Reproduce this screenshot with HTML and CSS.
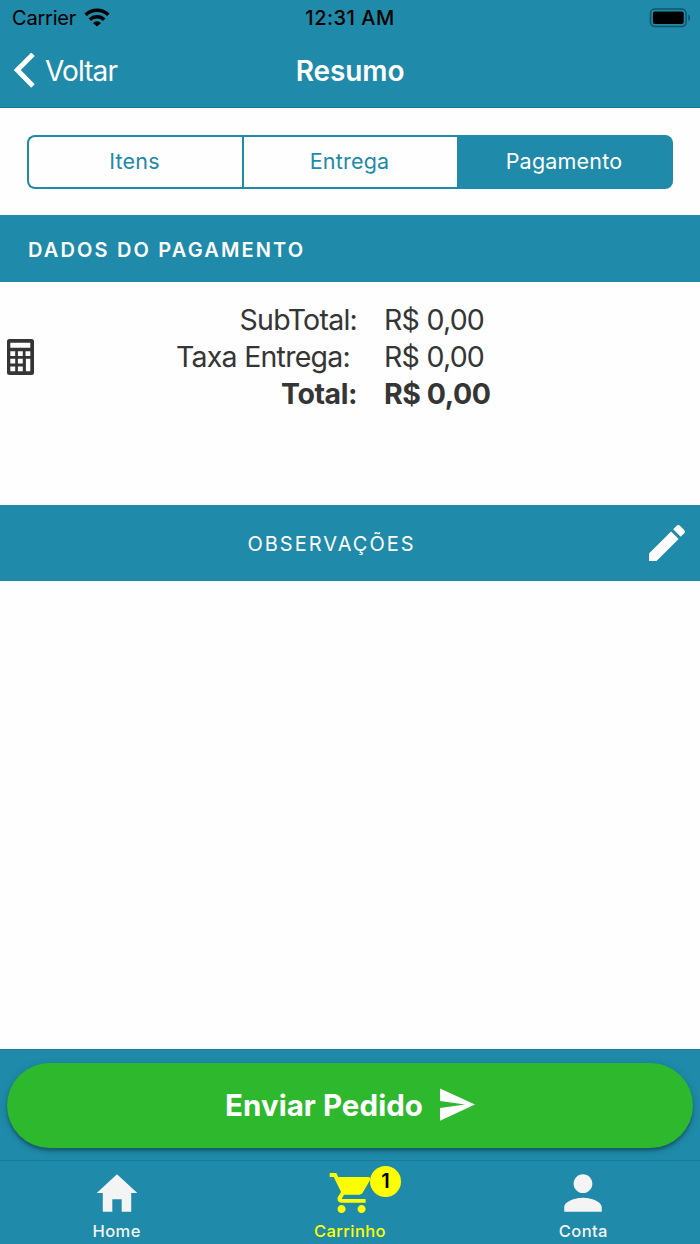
FILE: index.html
```html
<!DOCTYPE html>
<html lang="pt-BR">
<head>
    <meta charset="UTF-8">
    <meta name="viewport" content="width=device-width, initial-scale=1.0">
    <title>Resumo</title>
    <link rel="stylesheet" href="styles.css">
</head>
<body>
    <div class="app">
        <header class="header">
            <div class="status-bar">
                <div class="carrier">
                    <span class="carrier-name">Carrier</span>
                    <svg class="wifi" viewBox="0 0 26 19">
                        <g fill="none" stroke="#000" stroke-width="3.6">
                            <path d="M1.6 6.900a16.400 16.400 0 0 1 22.800 0"/>
                            <path d="M5.800 11.700a10.400 10.400 0 0 1 14.400 0"/>
                        </g>
                        <path d="M13 18.600L9 14.900a6 6 0 0 1 8 0z"/>
                    </svg>
                </div>
                <span class="clock">12:31 AM</span>
                <svg class="battery" viewBox="0 0 42 20">
                    <rect x="1.5" y="1" width="35.600" height="17.400" rx="4.400" fill="none" stroke="#115568" stroke-width="1.500"/>
                    <rect x="3.900" y="3.600" width="30.800" height="12.400" rx="2"/>
                    <path d="M39.300 6.600c2.400.8 2.400 5.600 0 6.400z" fill="#115568"/>
                </svg>
            </div>
            <div class="nav-bar">
                <a class="back" href="#">
                    <svg class="chevron" viewBox="0 0 22 36"><path d="M19 1.300L3.300 17l15.700 16" fill="none" stroke="#fff" stroke-width="5"/></svg>
                    <span class="back-text">Voltar</span>
                </a>
                <h1 class="title">Resumo</h1>
            </div>
        </header>

        <main class="content">
            <div class="segment">
                <button class="segment-button">Itens</button>
                <button class="segment-button">Entrega</button>
                <button class="segment-button active">Pagamento</button>
            </div>

            <h2 class="divider">Dados do Pagamento</h2>

            <div class="totals">
                <svg class="calculator" viewBox="0 0 27 36">
                    <path fill-rule="evenodd" d="M2.500 0h22A2.500 2.500 0 0 1 27 2.500v31a2.500 2.500 0 0 1-2.500 2.500h-22A2.500 2.500 0 0 1 0 33.500v-31A2.500 2.500 0 0 1 2.500 0zM3.300 3.800v5h20v-5zM3.300 12.200v4.800h4.900v-4.800zM10.900 12.200v4.800h4.900v-4.800zM18.500 12.200v4.800h4.800v-4.800zM3.300 19.800v4.800h4.900v-4.800zM10.900 19.800v4.800h4.900v-4.800zM3.300 27.400v4.900h4.900v-4.900zM10.900 27.400v4.900h4.900v-4.900zM18.900 19.800v12.500h4.400v-12.500z"/>
                </svg>
                <div class="totals-grid">
                    <span class="label">SubTotal:</span>
                    <span class="value">R$ 0,00</span>
                    <span class="label fee">Taxa Entrega:</span>
                    <span class="value">R$ 0,00</span>
                    <span class="label total">Total:</span>
                    <span class="value total">R$ 0,00</span>
                </div>
            </div>

            <div class="notes">
                <span class="notes-text">Observações</span>
                <svg class="pencil" viewBox="0 0 512 512"><path d="M64 368v80h80l235.727-235.729-79.999-79.998L64 368zm377.602-217.602c8.531-8.531 8.531-21.334 0-29.865l-50.135-50.135c-8.531-8.531-21.334-8.531-29.865 0l-39.468 39.469 79.999 79.998 39.469-39.467z"/></svg>
            </div>
        </main>

        <footer class="footer">
            <button class="send">
                <span class="send-text">Enviar Pedido</span>
                <svg class="send-icon" viewBox="0 0 512 512"><path d="M48 448l416-192L48 64v149.333L346 256 48 298.667z"/></svg>
            </button>
        </footer>

        <nav class="tabs">
            <a class="tab" href="#">
                <svg class="tab-icon" viewBox="0 0 512 512"><path d="M208 448V320h96v128h97.600V256H464L256 64 48 256h62.400v192z"/></svg>
                <span class="tab-text">Home</span>
            </a>
            <a class="tab selected" href="#">
                <svg class="tab-icon" viewBox="0 0 512 512"><path d="M169.600 377.600c-22.882 0-41.600 18.718-41.600 41.601 0 22.882 18.718 41.600 41.600 41.600s41.601-18.718 41.601-41.600c-.001-22.884-18.720-41.601-41.601-41.601zM48 51.200v41.600h41.600l74.883 151.682-31.308 50.954c-3.118 5.200-5.200 12.482-5.200 19.765 0 27.850 19.025 41.600 44.825 41.600H416v-40H177.893c-3.118 0-5.200-2.082-5.200-5.200 0-1.036 2.207-5.200 2.207-5.200l20.782-32.800h154.954c15.601 0 29.128-8.317 36.400-21.836l74.882-128.800c1.237-2.461 2.082-6.246 2.082-10.400 0-11.446-9.364-19.765-20.800-19.765H135.364L115.600 51.200H48zm326.399 326.400c-22.882 0-41.600 18.718-41.600 41.601 0 22.882 18.718 41.600 41.600 41.600S416 442.082 416 419.200c0-22.883-18.719-41.600-41.601-41.600z"/></svg>
                <span class="badge">1</span>
                <span class="tab-text">Carrinho</span>
            </a>
            <a class="tab" href="#">
                <svg class="tab-icon" viewBox="0 0 512 512"><path d="M256 256c52.805 0 96-43.201 96-96s-43.195-96-96-96-96 43.201-96 96 43.195 96 96 96zm0 48c-63.598 0-192 32.402-192 96v48h384v-48c0-63.598-128.402-96-192-96z"/></svg>
                <span class="tab-text">Conta</span>
            </a>
        </nav>
    </div>
</body>
</html>
```
FILE: styles.css
```css
* {
    box-sizing: border-box;
}
body {
    margin: 0;
    font-family: Inter, "Liberation Sans", sans-serif;
    background-color: #fefefe;
    color: #353535;
}
a {
    text-decoration: none;
    color: inherit;
}
button {
    font-family: inherit;
    cursor: pointer;
}
svg {
    display: block;
    flex: none;
}
.app {
    display: flex;
    flex-direction: column;
    width: 700px;
    height: 1244px;
    overflow: hidden;
}
.header {
    height: 108px;
    background-color: #1f8aa9;
    border-bottom: 1px solid #187b98;
}
.status-bar {
    display: grid;
    grid-template-columns: 1fr auto 1fr;
    align-items: center;
    height: 35px;
    padding: 0 9px 0 12px;
    color: #000;
    font-size: 20px;
}
.carrier {
    display: flex;
    align-items: center;
    gap: 8px;
}
.carrier-name {
    padding-top: 1px;
    letter-spacing: -0.2px;
}
.wifi {
    width: 26px;
    height: 19px;
}
.clock {
    padding-top: 1px;
    margin-right: 3px;
    font-weight: 500;
    letter-spacing: 0.5px;
}
.battery {
    width: 42px;
    height: 20px;
    justify-self: end;
}
.nav-bar {
    display: grid;
    grid-template-columns: 1fr auto 1fr;
    align-items: center;
    height: 71px;
    padding: 0 14px;
    color: #fff;
    font-size: 28px;
}
.back {
    display: flex;
    align-items: center;
    gap: 9px;
}
.chevron {
    width: 22px;
    height: 36px;
}
.back-text {
    padding-top: 1px;
    font-weight: 400;
    letter-spacing: -0.9px;
}
.title {
    margin: 0;
    padding-top: 1px;
    font-size: 28px;
    font-weight: 600;
    letter-spacing: -0.1px;
}
.content {
    flex: 1;
}
.segment {
    display: grid;
    grid-template-columns: 215px 215px 216px;
    height: 54px;
    margin: 27px 27px 0;
}
.segment-button {
    padding: 0 2px 2px 0;
    border: 2px solid #1f8aa9;
    border-right: none;
    background: none;
    color: #1f8aa9;
    font-size: 21.5px;
    letter-spacing: 0.2px;
}
.segment-button:first-child {
    border-radius: 8px 0 0 8px;
}
.segment-button:last-child {
    border-radius: 0 8px 8px 0;
    padding-right: 4px;
}
.segment-button.active {
    background-color: #1f8aa9;
    color: #fff;
}
.divider {
    display: flex;
    align-items: center;
    height: 67px;
    margin: 26px 0 0;
    padding: 2px 28px 0;
    background-color: #1f8aa9;
    color: #fff;
    font-size: 20px;
    font-weight: 600;
    letter-spacing: 2.15px;
    text-transform: uppercase;
}
.totals {
    display: flex;
    align-items: center;
    height: 223px;
    padding: 0 7px 73px;
}
.calculator {
    width: 27px;
    height: 36px;
    fill: #353535;
}
.totals-grid {
    display: grid;
    grid-template-columns: 323px auto;
    column-gap: 27px;
    padding-bottom: 2px;
    font-size: 28.5px;
    line-height: 37px;
    font-weight: 400;
    letter-spacing: -0.75px;
}
.label {
    text-align: right;
}
.label.fee {
    padding-right: 7px;
}
.total {
    font-weight: 700;
    letter-spacing: -0.45px;
}
.notes {
    display: flex;
    align-items: center;
    height: 76px;
    padding: 0 9px 0 20px;
    background-color: #1f8aa9;
    color: #fff;
}
.notes-text {
    flex: 1;
    padding-top: 1px;
    text-align: center;
    font-size: 20px;
    letter-spacing: 2px;
    text-transform: uppercase;
}
.pencil {
    width: 48px;
    height: 48px;
    fill: #fff;
}
.footer {
    height: 111px;
    padding: 13px 7px 0;
    background-color: #1f8aa9;
    border-top: 1px solid #187b98;
}
.send {
    display: flex;
    align-items: center;
    justify-content: center;
    gap: 13px;
    width: 100%;
    height: 85px;
    padding: 0 0 2px 4px;
    border: none;
    border-radius: 43px;
    background-color: #2eb82e;
    color: #fff;
    font-size: 29.5px;
    font-weight: 700;
    letter-spacing: 0.05px;
    box-shadow: 0 3px 3px rgba(0, 0, 0, 0.25), 0 2px 8px rgba(0, 0, 0, 0.15);
}
.send-icon {
    width: 43px;
    height: 43px;
    fill: #fff;
}
.tabs {
    display: flex;
    height: 84px;
    background-color: #1f8aa9;
    border-top: 1px solid #187b98;
    color: #f4f4f4;
    fill: #f4f4f4;
}
.tab {
    position: relative;
    flex: 1;
    display: flex;
    flex-direction: column;
    align-items: center;
    padding-top: 7px;
}
.tab.selected {
    color: #ff0;
    fill: #ff0;
}
.tab-icon {
    width: 50px;
    height: 50px;
}
.tab-text {
    margin-top: 3px;
    font-size: 16.5px;
    line-height: 20px;
    font-weight: 500;
    letter-spacing: 0.4px;
}
/* item count over the cart icon */
.badge {
    position: absolute;
    top: 5px;
    left: calc(50% + 20px);
    width: 31px;
    height: 31px;
    border-radius: 50%;
    background-color: #ff0;
    color: #000;
    font-size: 20px;
    line-height: 31px;
    font-weight: 600;
    text-align: center;
}
```
